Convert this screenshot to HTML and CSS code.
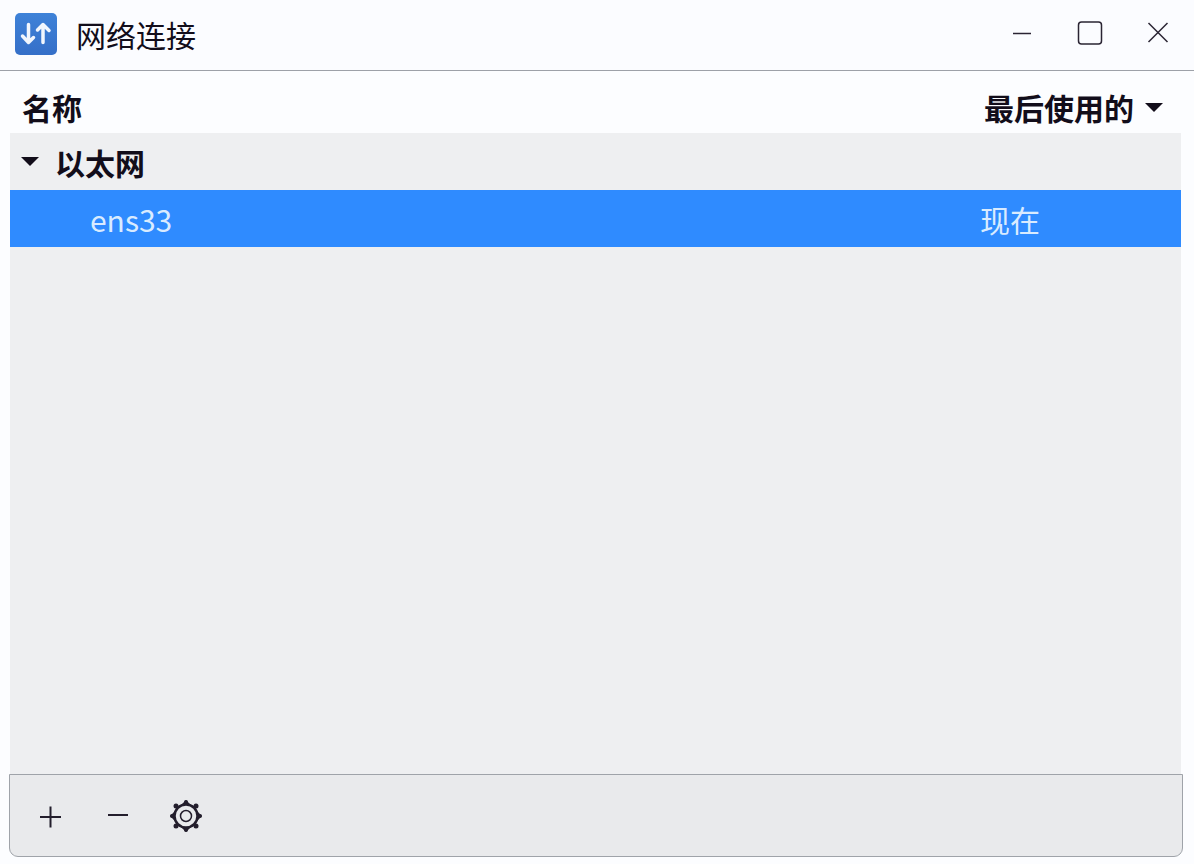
FILE: index.html
```html
<!DOCTYPE html>
<html lang="zh-CN">
<head>
  <meta charset="UTF-8">
  <title>网络连接</title>
  <link rel="stylesheet" href="styles.css">
</head>
<body>

  <!-- 标题栏 -->
  <header class="titlebar">
    <svg class="app-icon" viewBox="0 0 42 42" aria-hidden="true">
      <defs>
        <linearGradient id="app-bg" x1="0" y1="0" x2="0" y2="1">
          <stop offset="0" stop-color="#3e82d8"/>
          <stop offset="1" stop-color="#356fc8"/>
        </linearGradient>
      </defs>
      <rect width="42" height="42" rx="5" fill="url(#app-bg)"/>
      <g fill="none" stroke="#f1f6fd" stroke-width="3.5" stroke-linecap="round" stroke-linejoin="round">
        <path d="M13.500 11.500v18M7.500 23l6 6.500 5-5"/>
        <path d="M28 29.500V11.500M22.500 17l5.500-5.500 6 6"/>
      </g>
    </svg>
    <h1 class="title">网络连接</h1>
    <div class="window-buttons">
      <button type="button" aria-label="最小化">
        <svg viewBox="0 0 26 26"><path d="M4 12.500h18"/></svg>
      </button>
      <button type="button" aria-label="最大化">
        <svg viewBox="0 0 26 26"><rect x="1.500" y="1" width="23" height="22" rx="3"/></svg>
      </button>
      <button type="button" aria-label="关闭">
        <svg viewBox="0 0 26 26"><path d="M3.500 2l19 19M22.500 2l-19 19"/></svg>
      </button>
    </div>
  </header>

  <!-- 连接列表 -->
  <main class="content">
    <div class="list">
      <table class="connections">
        <thead>
          <tr>
            <th class="name">名称</th>
            <th class="used">
              <button type="button" class="sort">最后使用的
                <svg class="arrow" viewBox="0 0 18 10"><path d="M0 1h18L9 10z"/></svg>
              </button>
            </th>
          </tr>
        </thead>
        <tbody>
          <tr class="group">
            <th colspan="2">
              <button type="button" class="toggle" aria-expanded="true">
                <svg class="arrow" viewBox="0 0 18 10"><path d="M0 0h18L9 9z"/></svg>
                以太网
              </button>
            </th>
          </tr>
          <tr class="selected">
            <td class="name">ens33</td>
            <td class="used">现在</td>
          </tr>
        </tbody>
      </table>
    </div>

    <!-- 工具栏 -->
    <div class="toolbar">
      <button type="button" aria-label="添加">
        <svg viewBox="0 0 34 34"><path d="M6 18h21M16.500 7.500v21"/></svg>
      </button>
      <button type="button" aria-label="删除">
        <svg viewBox="0 0 34 34"><path d="M7 16h20"/></svg>
      </button>
      <button type="button" aria-label="设置">
        <svg viewBox="0 0 34 34">
          <g fill="#231e2c" stroke="none">
            <path d="M18 1l7 7H11zM18 33l7-7H11zM2 17l7-7v14zM34 17l-7-7v14z"/>
            <circle cx="18" cy="3" r="2"/><circle cx="18" cy="31" r="2"/>
            <circle cx="4" cy="17" r="2"/><circle cx="32" cy="17" r="2"/>
            <circle cx="8" cy="7" r="2.500"/><circle cx="28" cy="7" r="2.500"/>
            <circle cx="8" cy="27" r="2.500"/><circle cx="28" cy="27" r="2.500"/>
          </g>
          <circle cx="18" cy="17" r="11.500" fill="#e9eaec" stroke-width="2.500"/>
          <circle cx="18" cy="17" r="5.500" stroke-width="1.500"/>
        </svg>
      </button>
    </div>
  </main>

</body>
</html>
```
FILE: styles.css
```css
* {
  box-sizing: border-box;
}

body {
  margin: 0;
  min-height: 100vh;
  display: flex;
  flex-direction: column;
  font-family: "Noto Sans CJK SC", sans-serif;
  font-size: 30px;
  line-height: 44px;
  color: #120d1a;
  background-color: #fcfdff;
}

button {
  margin: 0;
  padding: 0;
  border: none;
  background: none;
  font: inherit;
  color: inherit;
}

svg {
  display: block;
  flex: none;
}

/* 标题栏 */
.titlebar {
  display: flex;
  align-items: center;
  height: 71px;
  padding: 0 23px 3px 15px;
  border-bottom: 1px solid #9da1a8;
  background-color: #fbfcff;
}

.app-icon {
  width: 42px;
  height: 42px;
}

.title {
  margin: 0 0 0 19px;
  font-size: 30px;
  font-weight: normal;
}

.window-buttons {
  display: flex;
  gap: 42px;
  margin-left: auto;
}

.window-buttons svg {
  width: 26px;
  height: 26px;
  fill: none;
  stroke: #2a2433;
  stroke-width: 1.5;
}

/* 连接列表 */
.content {
  flex: 1;
  display: flex;
  flex-direction: column;
  padding: 0 11px 7px 9px;
}

.list {
  flex: 1;
  margin: 0 2px 0 1px;
  background-color: #eeeff1;
}

.connections {
  width: 100%;
  border-collapse: collapse;
}

.connections th,
.connections td {
  height: 57px;
  padding: 0;
  text-align: left;
}

.connections thead th {
  height: 62px;
  padding: 10px 0 0 12px;
  background-color: #fcfdff;
}

.connections .used {
  width: 213px;
  padding-left: 12px;
}

.connections thead .used {
  padding-left: 16px;
}

.sort,
.toggle {
  display: flex;
  align-items: center;
}

.sort {
  gap: 11px;
}

.toggle {
  gap: 16px;
  padding-left: 11px;
}

.arrow {
  width: 18px;
  height: 10px;
  fill: #120d1a;
}

.selected {
  background-color: #2f8bff;
  color: #d9ebff;
}

.connections td.name {
  padding-left: 80px;
}

/* 工具栏 */
.toolbar {
  display: flex;
  align-items: center;
  gap: 33px;
  height: 83px;
  padding-left: 24px;
  border: 1px solid #9fa3a9;
  border-radius: 0 0 9px 9px;
  background-color: #e9eaec;
}

.toolbar svg {
  width: 34px;
  height: 34px;
  fill: none;
  stroke: #231e2c;
  stroke-width: 2;
}
```
